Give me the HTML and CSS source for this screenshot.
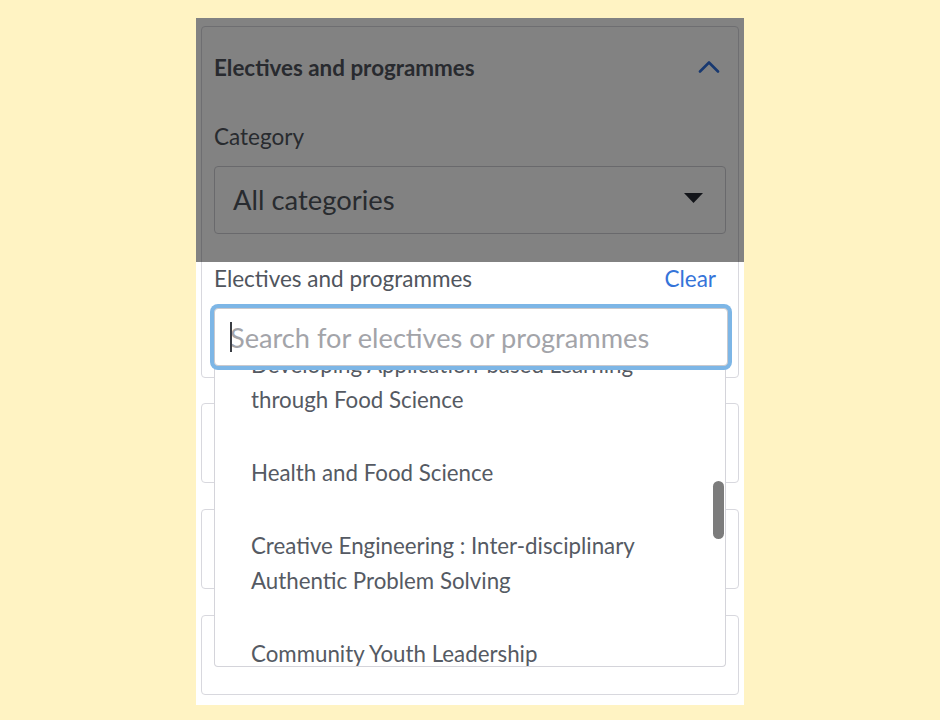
FILE: index.html
```html
<!DOCTYPE html>
<html lang="en">
<head>
<meta charset="utf-8">
<title>Electives and programmes</title>
<link rel="stylesheet" href="styles.css">
</head>
<body>
<div class="panel">
  <section class="card card-main">
    <div class="card-header">
      <h2 class="card-title">Electives and programmes</h2>
      <svg class="chevron" width="22" height="13" viewBox="0 0 22 13" aria-hidden="true">
        <polyline points="2,11.5 11,2.5 20,11.5" fill="none" stroke="#2f6fdb" stroke-width="2.6" stroke-linecap="round" stroke-linejoin="round"/>
      </svg>
    </div>
    <div class="field-label">Category</div>
    <div class="select">
      <span class="select-value">All categories</span>
      <svg class="caret" width="19" height="10" viewBox="0 0 19 10" aria-hidden="true">
        <polygon points="0,0 19,0 9.5,10" fill="#262a33"/>
      </svg>
    </div>
    <div class="row-label">
      <span class="field-label-inline">Electives and programmes</span>
      <span class="clear">Clear</span>
    </div>
    <div class="search-wrap">
      <input class="search" type="text" placeholder="Search for electives or programmes">
      <span class="text-caret"></span>
      <div class="dropdown">
        <ul class="options">
          <li class="option">Developing Application-based Learning through Food Science</li>
          <li class="option">Health and Food Science</li>
          <li class="option">Creative Engineering : Inter-disciplinary Authentic Problem Solving</li>
          <li class="option">Community Youth Leadership</li>
        </ul>
        <span class="thumb"></span>
      </div>
    </div>
  </section>
  <section class="card card-small"></section>
  <section class="card card-small"></section>
  <section class="card card-small"></section>
  <div class="dim"></div>
</div>
</body>
</html>
```

FILE: styles.css
```css
html, body {
  margin: 0;
  padding: 0;
}

body {
  background: #fff3c3;
  font-family: Lato, "Noto Sans", "Liberation Sans", sans-serif;
  color: #50555d;
  width: 940px;
  height: 720px;
  overflow: hidden;
}

.panel {
  position: relative;
  box-sizing: border-box;
  width: 548px;
  height: 687px;
  margin: 18px 0 0 196px;
  padding: 8px 5px 10px;
  background: #ffffff;
}

.card {
  box-sizing: border-box;
  border: 1px solid #d8d8de;
  border-radius: 4px;
  background: #ffffff;
}

.card-main {
  padding: 0 12px 11px;
}

.card-small {
  height: 80px;
  margin-top: 26px;
}

.card-main + .card-small {
  margin-top: 25px;
}

.card-header {
  height: 82px;
  display: flex;
  align-items: center;
  justify-content: space-between;
}

.card-title {
  margin: 0;
  font-size: 22.4px;
  line-height: 24px;
  font-weight: 700;
  color: #4f545c;
}

.chevron {
  margin-right: 6px;
  margin-top: -4px;
}

.field-label {
  margin-top: 16px;
  font-size: 22.5px;
  line-height: 24px;
  color: #50555d;
}

.select {
  box-sizing: border-box;
  margin-top: 17px;
  height: 68px;
  border: 1px solid #cfcfd4;
  border-radius: 4px;
  display: flex;
  align-items: center;
  justify-content: space-between;
  padding: 0 22px 0 18px;
}

.select-value {
  font-size: 27.4px;
  line-height: 32px;
  color: #50555d;
}

.caret {
  margin-top: -4px;
}

.row-label {
  margin-top: 33px;
  display: flex;
  justify-content: space-between;
  align-items: center;
  font-size: 22.5px;
  line-height: 24px;
}

.field-label-inline {
  color: #50555d;
}

.clear {
  color: #3574d9;
  margin-right: 10px;
}

.search-wrap {
  position: relative;
  margin-top: 17px;
  width: calc(100% + 2px);
}

.search {
  position: relative;
  z-index: 3;
  display: block;
  box-sizing: border-box;
  width: 100%;
  height: 58px;
  margin: 0;
  padding: 0 15px;
  border: 1px solid #c9c9ce;
  border-radius: 4px;
  box-shadow: 0 0 0 4px #7db6e6;
  outline: none;
  background: #ffffff;
  font-family: Lato, "Noto Sans", "Liberation Sans", sans-serif;
  font-size: 27.2px;
  color: #50555d;
}

.search::placeholder {
  color: #a3a4a9;
  opacity: 1;
}

.text-caret {
  position: absolute;
  z-index: 4;
  left: 16px;
  top: 14px;
  width: 2px;
  height: 30px;
  background: #3a3d44;
}

.dropdown {
  position: absolute;
  z-index: 2;
  left: 0;
  top: 57px;
  box-sizing: border-box;
  width: 512px;
  height: 302px;
  border: 1px solid #d4d4da;
  border-top: none;
  border-radius: 0 0 4px 4px;
  background: #ffffff;
  overflow: hidden;
}

.options {
  list-style: none;
  margin: -37px 0 0;
  padding: 0;
}

.option {
  padding: 19px 50px 19px 36px;
  font-size: 22.3px;
  line-height: 35px;
  color: #555a63;
}

.thumb {
  position: absolute;
  right: 1px;
  top: 116px;
  width: 11px;
  height: 58px;
  border-radius: 6px;
  background: #7c7c7c;
}

.dim {
  position: absolute;
  left: 0;
  top: 0;
  width: 100%;
  height: 244px;
  background: rgba(0, 0, 0, 0.49);
  z-index: 10;
}
```
